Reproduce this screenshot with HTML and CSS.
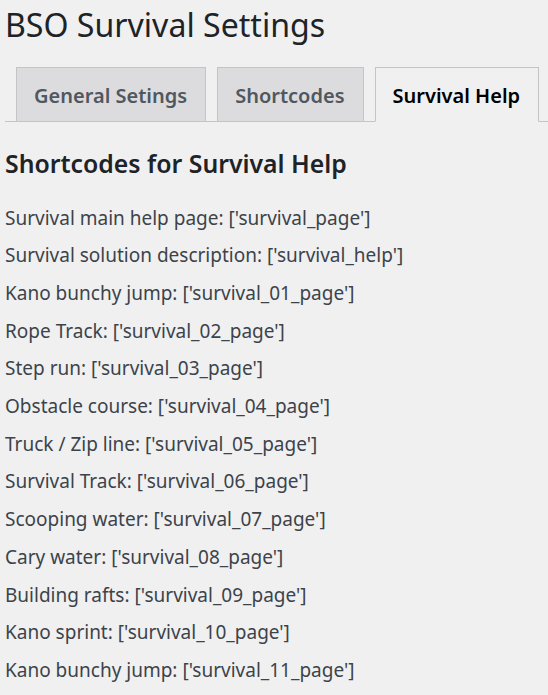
FILE: index.html
```html
<!DOCTYPE html>
<html lang="en">
<head>
<meta charset="utf-8">
<title>BSO Survival Settings</title>
<link rel="stylesheet" href="styles.css">
</head>
<body>
<div class="wrap">
  <h1 class="page-title">BSO Survival Settings</h1>
  <nav class="tabs">
    <a class="tab">General Setings</a>
    <a class="tab">Shortcodes</a>
    <a class="tab tab-active">Survival Help</a>
  </nav>
  <h2 class="section-title">Shortcodes for Survival Help</h2>
  <div class="codes">
    <p class="code">Survival main help page: ['survival_page']</p>
    <p class="code">Survival solution description: ['survival_help']</p>
    <p class="code">Kano bunchy jump: ['survival_01_page']</p>
    <p class="code">Rope Track: ['survival_02_page']</p>
    <p class="code">Step run: ['survival_03_page']</p>
    <p class="code">Obstacle course: ['survival_04_page']</p>
    <p class="code">Truck / Zip line: ['survival_05_page']</p>
    <p class="code">Survival Track: ['survival_06_page']</p>
    <p class="code">Scooping water: ['survival_07_page']</p>
    <p class="code">Cary water: ['survival_08_page']</p>
    <p class="code">Building rafts: ['survival_09_page']</p>
    <p class="code">Kano sprint: ['survival_10_page']</p>
    <p class="code">Kano bunchy jump: ['survival_11_page']</p>
  </div>
</div>
</body>
</html>
```

FILE: styles.css
```css
html, body {
  margin: 0;
  padding: 0;
  background: #f0f0f1;
}
body {
  font-family: "Noto Sans", "Open Sans", sans-serif;
  color: #3c434a;
  overflow: hidden;
}
.wrap {
  padding-left: 5px;
}
.page-title {
  margin: 0;
  font-size: 32.1px;
  line-height: 49px;
  font-weight: 400;
  color: #1d2327;
}
.tabs {
  display: flex;
  gap: 11px;
  margin-top: 18px;
  padding-left: 11px;
  height: 54px;
  border-bottom: 1px solid #c3c4c7;
}
.tab {
  display: block;
  box-sizing: border-box;
  height: 55px;
  padding: 13px 18px 10px 17px;
  font-size: 20px;
  line-height: 30px;
  font-weight: 600;
  color: #50575e;
  background: #dcdcde;
  border: 1px solid #c3c4c7;
  white-space: nowrap;
}
.tab-active {
  background: #f0f0f1;
  color: #000;
  border-bottom-color: #f0f0f1;
}
.section-title {
  margin: 24px 0 0;
  font-size: 24.8px;
  line-height: 34px;
  font-weight: 600;
  color: #1d2327;
}
.codes {
  display: flex;
  flex-direction: column;
  margin-top: 19.5px;
}
.code {
  margin: 0;
  font-size: 19px;
  line-height: 37.7px;
}
```
